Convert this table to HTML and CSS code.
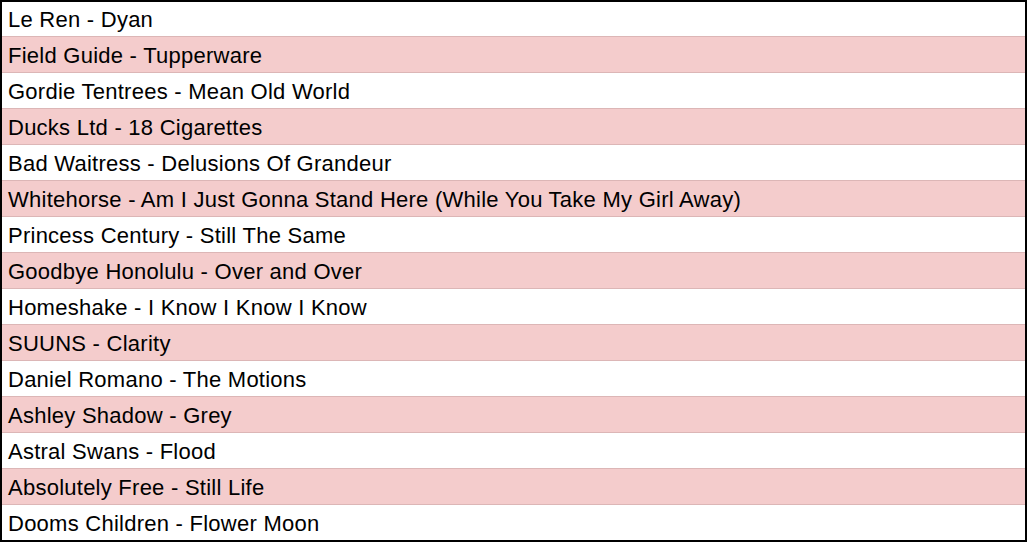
FILE: index.html
```html
<!DOCTYPE html>
<html>
<head>
<meta charset="utf-8">
<link rel="stylesheet" href="styles.css">
</head>
<body>
<div class="list">
  <div class="row">Le Ren - Dyan</div>
  <div class="row alt">Field Guide - Tupperware</div>
  <div class="row">Gordie Tentrees - Mean Old World</div>
  <div class="row alt">Ducks Ltd - 18 Cigarettes</div>
  <div class="row">Bad Waitress - Delusions Of Grandeur</div>
  <div class="row alt">Whitehorse - Am I Just Gonna Stand Here (While You Take My Girl Away)</div>
  <div class="row">Princess Century - Still The Same</div>
  <div class="row alt">Goodbye Honolulu - Over and Over</div>
  <div class="row">Homeshake - I Know I Know I Know</div>
  <div class="row alt">SUUNS - Clarity</div>
  <div class="row">Daniel Romano - The Motions</div>
  <div class="row alt">Ashley Shadow - Grey</div>
  <div class="row">Astral Swans - Flood</div>
  <div class="row alt">Absolutely Free - Still Life</div>
  <div class="row">Dooms Children - Flower Moon</div>
</div>
</body>
</html>
```

FILE: styles.css
```css
html, body {
  margin: 0;
  padding: 0;
  background: #ffffff;
}
.list {
  width: 1027px;
  height: 542px;
  box-sizing: border-box;
  border: 2px solid #000000;
  display: flex;
  flex-direction: column;
  font-family: "Liberation Sans", Arial, sans-serif;
  font-size: 22px;
  letter-spacing: 0.25px;
  color: #000000;
}
.row {
  height: 35px;
  box-sizing: border-box;
  flex: 0 0 auto;
  border-top: 1px solid #dcb6b6;
  padding-left: 6px;
  padding-top: 2px;
  display: flex;
  align-items: center;
  white-space: nowrap;
}
.row:first-child {
  border-top: none;
  height: 34px;
}
.row:not(:first-child) {
  height: 36px;
}
.alt {
  background: #f4cccc;
}
```
